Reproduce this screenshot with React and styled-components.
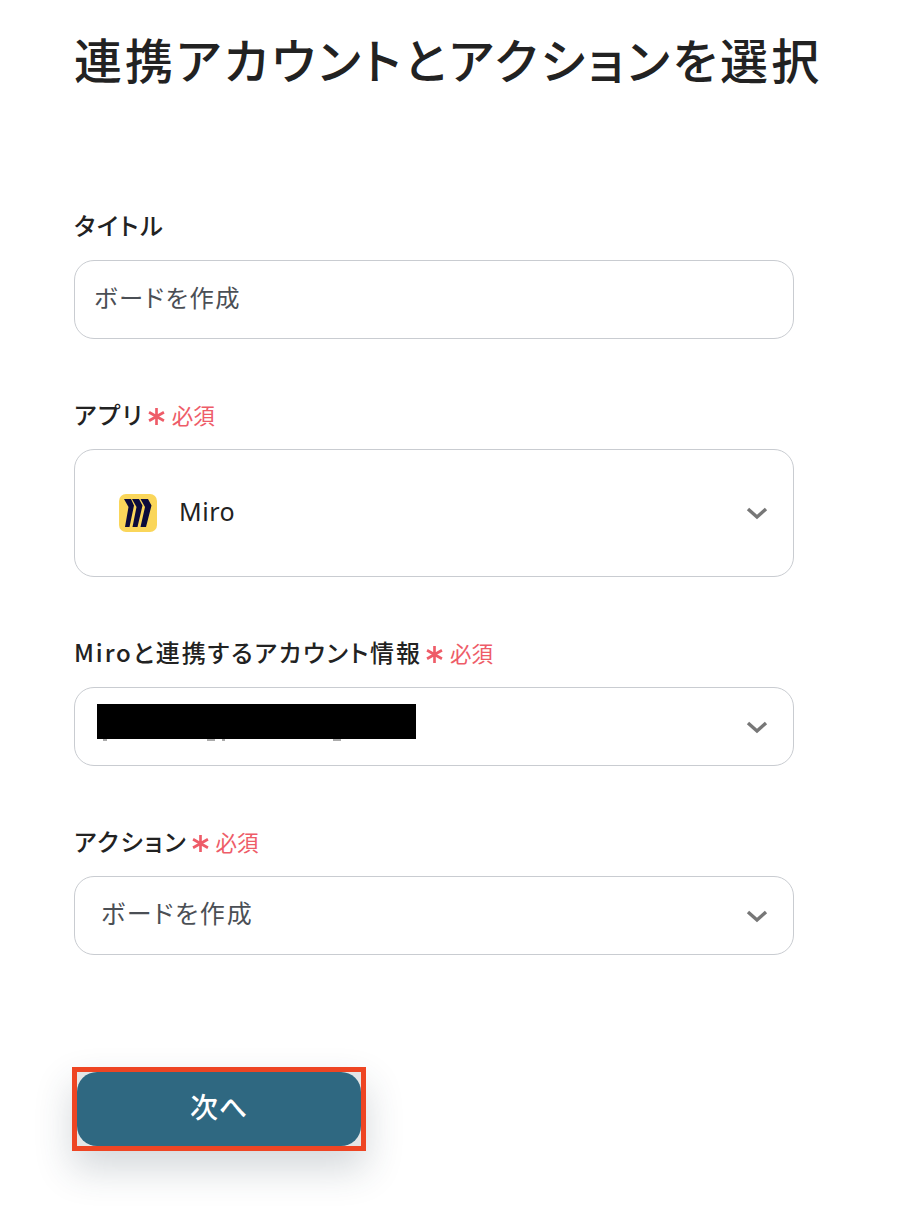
import { createGlobalStyle, styled } from "styled-components";

const GlobalStyle = createGlobalStyle`
  html, body {
    margin: 0;
    background: #fff;
  }
  body {
    font-family: "Noto Sans CJK JP", "Noto Sans", sans-serif;
    font-feature-settings: "palt";
    color: #222;
  }
`;

const Page = styled.div`
  width: 898px;
  height: 1208px;
  box-sizing: border-box;
  padding: 22px 0 0 74px;
  overflow: hidden;
`;

const Heading = styled.h1`
  margin: 0 0 113px;
  font-size: 48px;
  line-height: 72px;
  font-weight: 500;
  letter-spacing: 3.1px;
  white-space: nowrap;
  color: #222;
`;

const Fields = styled.div`
  display: flex;
  flex-direction: column;
  gap: 57px;
  width: 720px;
`;

const Field = styled.div`
  display: flex;
  flex-direction: column;
  gap: 17px;
`;

const Label = styled.div`
  display: flex;
  align-items: center;
  box-sizing: border-box;
  height: 36px;
  padding-bottom: 2px;
  font-size: 24px;
  font-weight: 500;
  letter-spacing: 1.9px;
  color: #222;
`;

const Required = styled.span`
  display: flex;
  align-items: center;
  margin: 2px 0 0 4px;
  font-size: 21.5px;
  font-weight: 400;
  letter-spacing: 0;
  color: #ee5c68;
`;

const Star = styled.svg`
  width: 17px;
  height: 17px;
  margin: 5px 7px 0 0;
`;

const Box = styled.div`
  position: relative;
  display: flex;
  align-items: center;
  box-sizing: border-box;
  height: ${(props) => props.$height || 79}px;
  padding-left: ${(props) => props.$inset || 26}px;
  border: 1px solid #c9ccd1;
  border-radius: 20px;
  background: #fff;
  color: #4b4f55;
`;

const Value = styled.span`
  padding-bottom: 7px;
  font-size: ${(props) => props.$size || 25}px;
  letter-spacing: ${(props) => props.$spacing || 1.8}px;
`;

const AppName = styled.span`
  margin-left: 22px;
  padding-bottom: 4px;
  font-family: "Noto Sans", sans-serif;
  font-size: 25px;
  letter-spacing: 0.5px;
  color: #222;
`;

const Chevron = styled.svg`
  position: absolute;
  right: 25px;
  top: 50%;
  width: 22px;
  height: 14px;
  margin-top: -7px;
`;

const Masked = styled.div`
  position: relative;
  width: 319px;
  height: 35px;
  margin: 0 0 10px -4px;
  background: #000;
`;

const Tail = styled.span`
  position: absolute;
  top: 35px;
  left: ${(props) => props.$left}px;
  width: ${(props) => props.$width}px;
  height: 2px;
  background: #aaa;
`;

const NextButton = styled.button`
  display: block;
  box-sizing: border-box;
  width: 294px;
  height: 84px;
  margin: 112px 0 0 -2px;
  padding: 0;
  border: 5px solid #ee4523;
  border-radius: 0;
  background: #e4e6e6;
  box-shadow: 0 18px 38px rgba(40, 60, 75, 0.2);
`;

const ButtonFace = styled.span`
  display: flex;
  align-items: center;
  justify-content: center;
  box-sizing: border-box;
  height: 100%;
  padding-bottom: 7px;
  border-radius: 20px;
  background: #2f6881;
  font-family: "Noto Sans CJK JP", sans-serif;
  font-size: 28px;
  font-weight: 500;
  letter-spacing: 1px;
  color: #fff;
`;

const MiroLogo = () => (
  <svg width="38" height="38" viewBox="0 0 38 38">
    <rect width="38" height="38" rx="7" fill="#fad65a" />
    <path fill="#0b0b3b" d="M5 5h7l3 6.500L10.500 33H6l3.500-20z" />
    <path fill="#0b0b3b" d="M13 5h7l3.500 6.500L18.500 33H13.500l4-20z" />
    <path fill="#0b0b3b" d="M21.500 5H29l3.500 6.500L27 33h-5.500l4.500-20z" />
  </svg>
);

const Arrow = () => (
  <Chevron viewBox="0 0 22 14">
    <path d="M2 3l9 8 9-8" fill="none" stroke="#777" strokeWidth="3.4" />
  </Chevron>
);

const RequiredMark = () => (
  <Required>
    <Star viewBox="0 0 16 16">
      <path d="M8 0v16M1 4l14 8M15 4L1 12" stroke="#ee5c68" strokeWidth="2.5" />
    </Star>
    必須
  </Required>
);

export default function App() {
  return (
    <Page>
      <GlobalStyle />
      <Heading>連携アカウントとアクションを選択</Heading>
      <Fields>
        <Field>
          <Label>タイトル</Label>
          <Box $inset={19}>
            <Value $size={24.3} $spacing={1.6}>ボードを作成</Value>
          </Box>
        </Field>
        <Field>
          <Label>
            アプリ
            <RequiredMark />
          </Label>
          <Box $height={128} $inset={44}>
            <MiroLogo />
            <AppName>Miro</AppName>
            <Arrow />
          </Box>
        </Field>
        <Field>
          <Label>
            Miroと連携するアカウント情報
            <RequiredMark />
          </Label>
          <Box>
            <Masked>
              <Tail $left={6} $width={4} />
              <Tail $left={110} $width={8} />
              <Tail $left={125} $width={3} />
              <Tail $left={236} $width={8} />
            </Masked>
            <Arrow />
          </Box>
        </Field>
        <Field>
          <Label>
            アクション
            <RequiredMark />
          </Label>
          <Box>
            <Value>ボードを作成</Value>
            <Arrow />
          </Box>
        </Field>
      </Fields>
      <NextButton>
        <ButtonFace>次へ</ButtonFace>
      </NextButton>
    </Page>
  );
}
